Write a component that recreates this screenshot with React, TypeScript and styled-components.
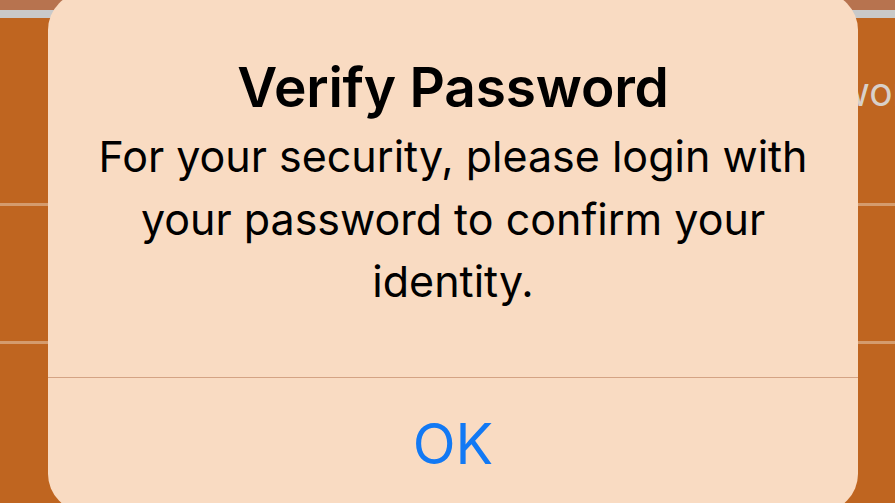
import React from "react";
import styled, { createGlobalStyle } from "styled-components";

const Global = createGlobalStyle`
  html, body {
    margin: 0;
    padding: 0;
    width: 895px;
    height: 503px;
    overflow: hidden;
    background: #bf6520;
    font-family: Inter, "Noto Sans", "Liberation Sans", sans-serif;
  }
`;

const Screen = styled.div`
  position: relative;
  width: 895px;
  height: 503px;
  overflow: hidden;
  background: #bf6520;
  display: flex;
  flex-direction: column;
`;

const StatusBar = styled.div`
  height: 10px;
  background: #b7734f;
`;

const NavEdge = styled.div`
  height: 8px;
  background: #c9c9c9;
`;

const Row = styled.div<{ $height: number }>`
  height: ${(p) => p.$height}px;
  border-bottom: 3px solid #d49b6d;
  display: flex;
  align-items: flex-start;
  padding-left: 750px;
  box-sizing: border-box;
  white-space: nowrap;
`;

const RowLabel = styled.span`
  margin-top: 52px;
  font-size: 39px;
  line-height: 44px;
  color: #d8d0c9;
`;

const Overlay = styled.div`
  position: absolute;
  left: 48px;
  top: -8px;
  width: 810px;
  height: 520px;
  border-radius: 38px;
  background: #f9dbc2;
  display: flex;
  flex-direction: column;
  align-items: center;
`;

const Title = styled.h1`
  margin: 63px 0 0;
  font-size: 55px;
  line-height: 64px;
  font-weight: 600;
  color: #000;
  letter-spacing: -0.2px;
`;

const Message = styled.p`
  margin: 6px 0 0;
  font-size: 43px;
  line-height: 62.5px;
  font-weight: 400;
  color: #000;
  text-align: center;
`;

const Divider = styled.div`
  align-self: stretch;
  margin-top: 64px;
  height: 1px;
  background: #d4a384;
`;

const Action = styled.button`
  align-self: stretch;
  height: 132px;
  border: none;
  background: transparent;
  font-family: inherit;
  font-size: 56px;
  font-weight: 400;
  color: #1279f4;
  display: flex;
  align-items: center;
  justify-content: center;
  padding: 0;
`;

export default function App() {
  return (
    <>
      <Global />
      <Screen>
        <StatusBar />
        <NavEdge />
        <Row $height={188}>
          <RowLabel>Password</RowLabel>
        </Row>
        <Row $height={138} />
        <Overlay>
          <Title>Verify Password</Title>
          <Message>
            For your security, please login with
            <br />
            your password to confirm your
            <br />
            identity.
          </Message>
          <Divider />
          <Action>OK</Action>
        </Overlay>
      </Screen>
    </>
  );
}
